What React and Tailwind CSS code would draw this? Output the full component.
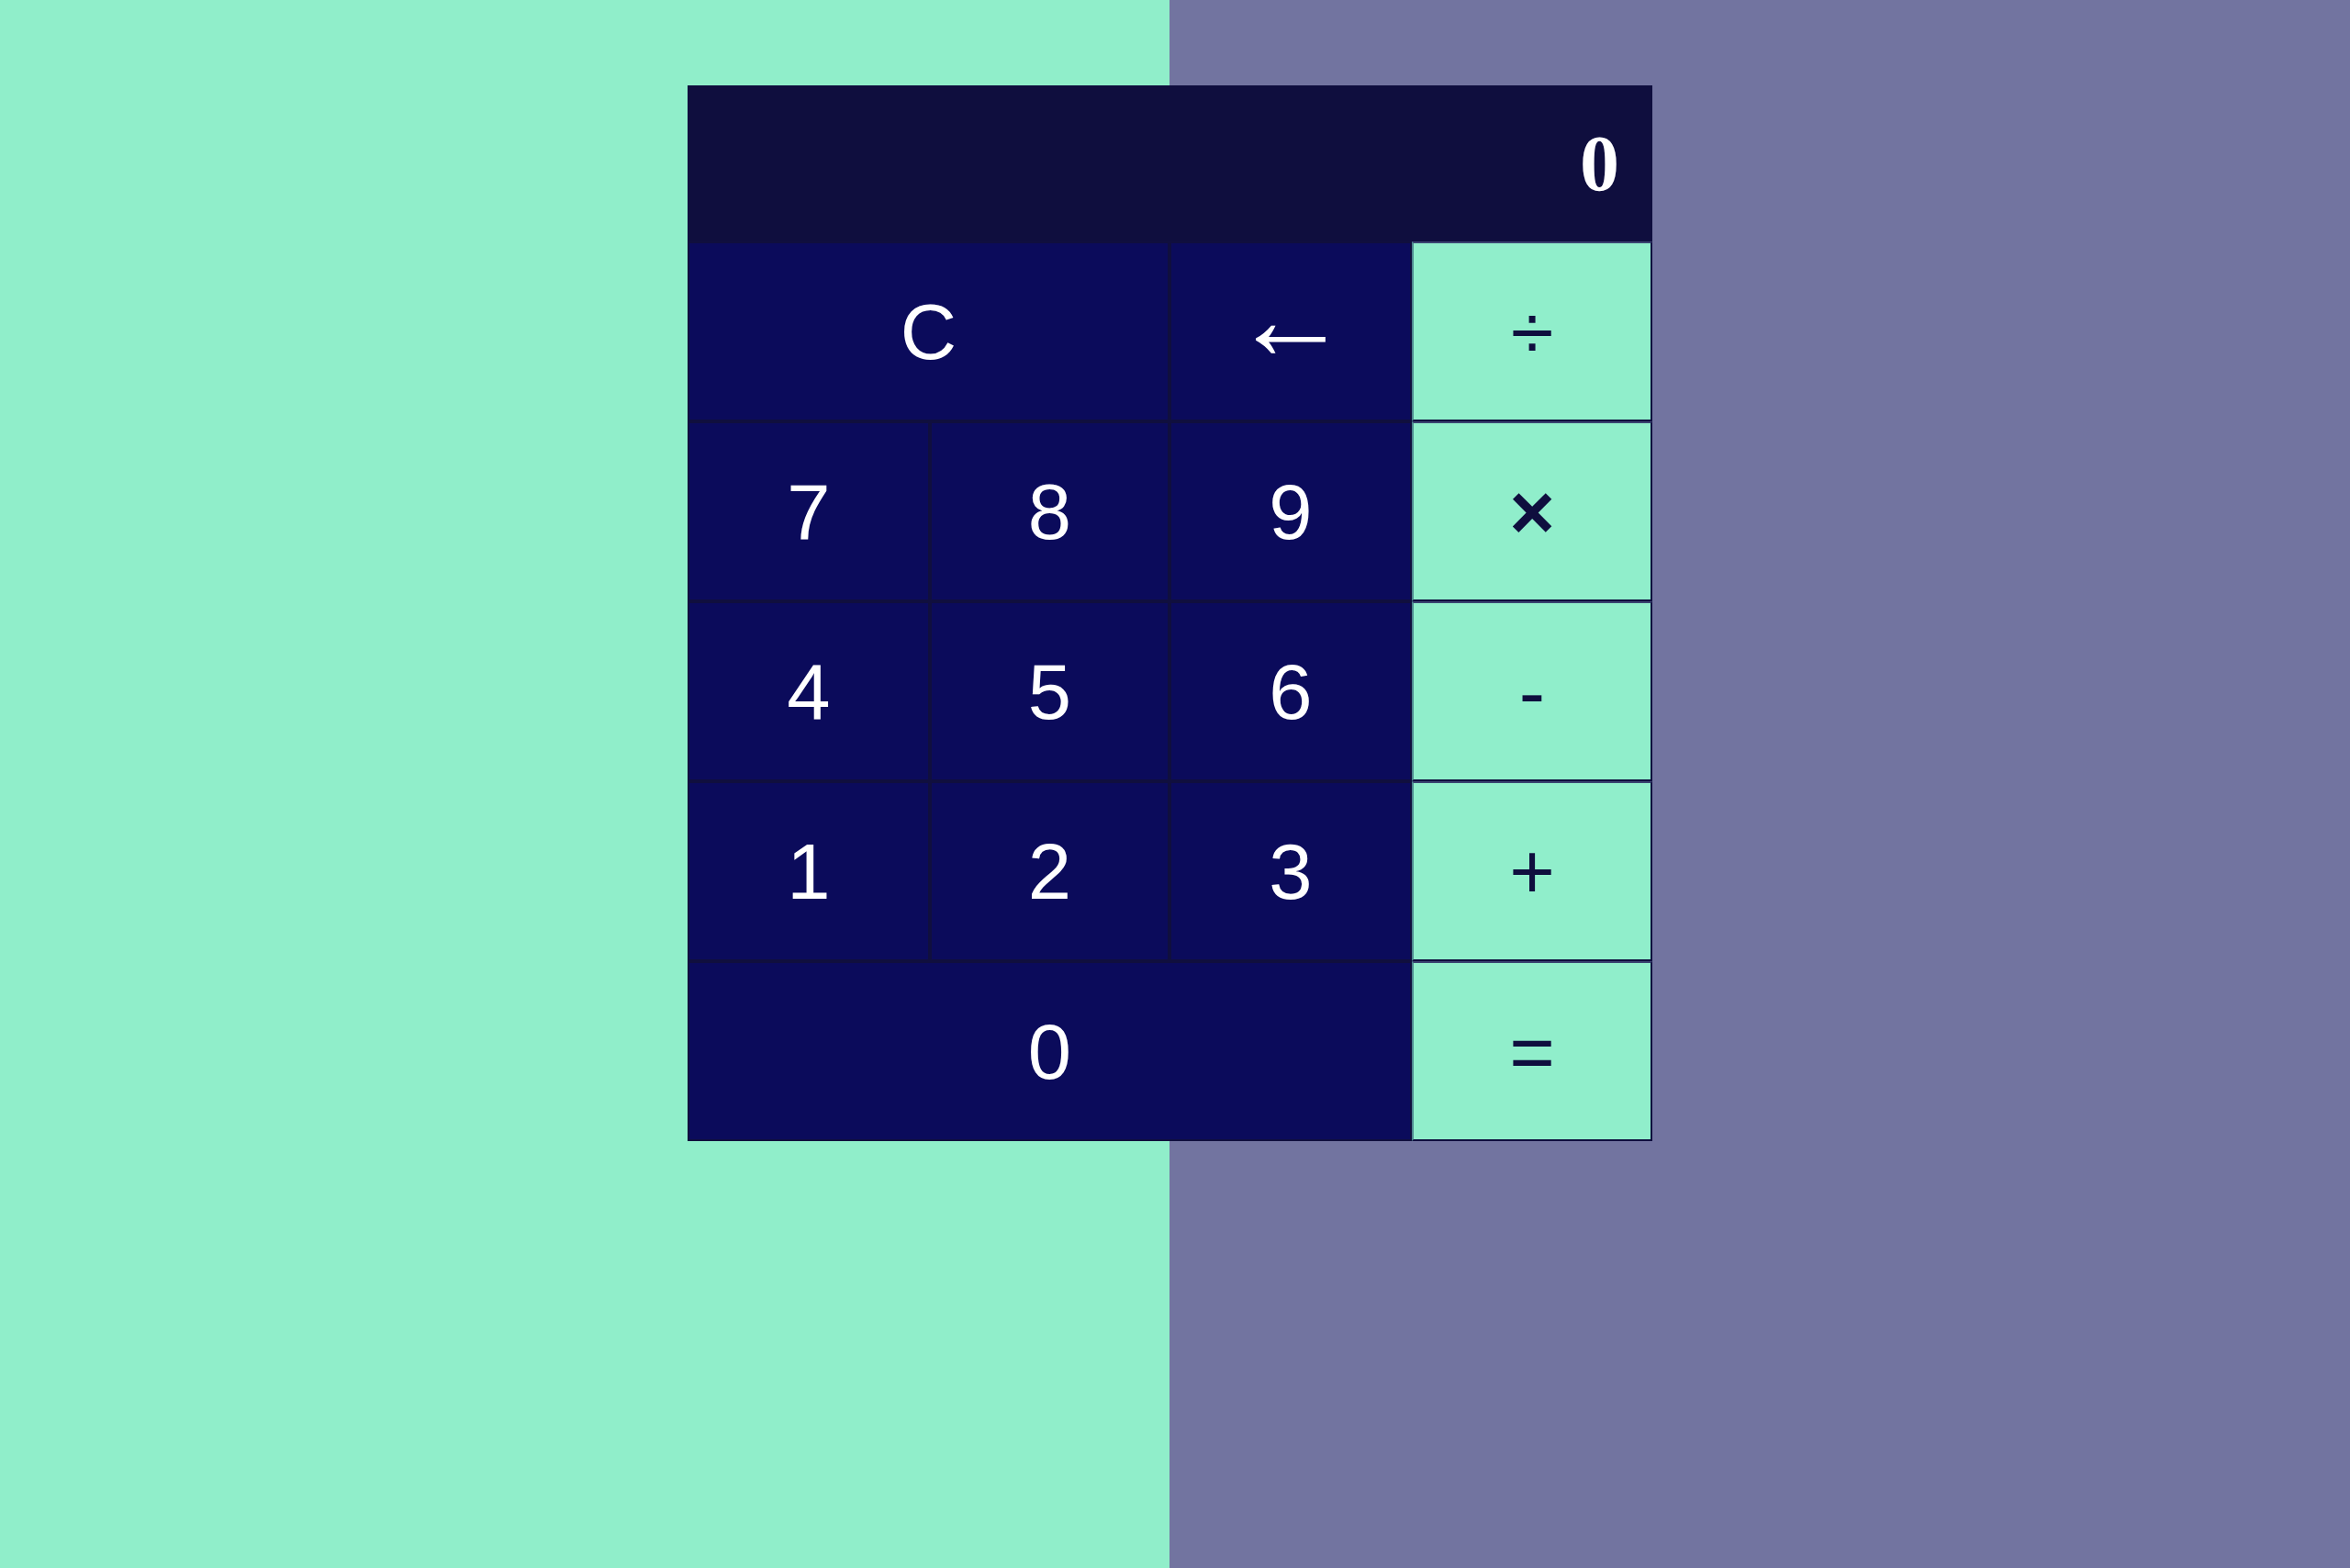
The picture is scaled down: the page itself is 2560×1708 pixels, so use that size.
import React, { useState } from 'react';

const dark =
  'bg-[#0b0b5b] text-white border-2 border-[#100f3e]';
const light =
  'bg-[#90eecb] text-[#0f0e3e] border-2 border-t-[#3a4370] border-l-[#4f8a90] border-b-[#0f0e3e] border-r-[#0f0e3e]';

const keys = [
  { label: 'C', cls: dark, span: 'col-span-2' },
  { label: '←', cls: dark, font: 'text-[128px] pb-[28px]' },
  { label: '÷', cls: light },
  { label: '7', cls: dark },
  { label: '8', cls: dark },
  { label: '9', cls: dark },
  { label: '×', cls: light, font: 'font-bold' },
  { label: '4', cls: dark },
  { label: '5', cls: dark },
  { label: '6', cls: dark },
  { label: '-', cls: light },
  { label: '1', cls: dark },
  { label: '2', cls: dark },
  { label: '3', cls: dark },
  { label: '+', cls: light },
  { label: '0', cls: dark, span: 'col-span-3' },
  { label: '=', cls: light },
];

const App = () => {
  const [value] = useState('0');

  return (
    <div className="min-h-screen w-full bg-[linear-gradient(to_right,#90eeca_1274px,#7274a0_1274px)] pt-[93px] pl-[749px]">
      <div className="w-[1051px]">
        <div className="h-[170px] bg-[#0f0e3e] flex items-center justify-end pr-[36px]">
          <span className="text-white font-bold text-[86px] leading-none font-['Liberation_Serif',serif]">
            {value}
          </span>
        </div>
        <div className="grid grid-cols-[264px_261px_264px_262px]">
          {keys.map((k) => (
            <button
              key={k.label}
              className={`${k.cls} ${k.span || ''} h-[196px] flex items-center justify-center text-[85px] leading-none font-['Liberation_Sans',Arial,sans-serif] ${k.font || ''}`}
            >
              {k.label}
            </button>
          ))}
        </div>
      </div>
    </div>
  );
};

export default App;
